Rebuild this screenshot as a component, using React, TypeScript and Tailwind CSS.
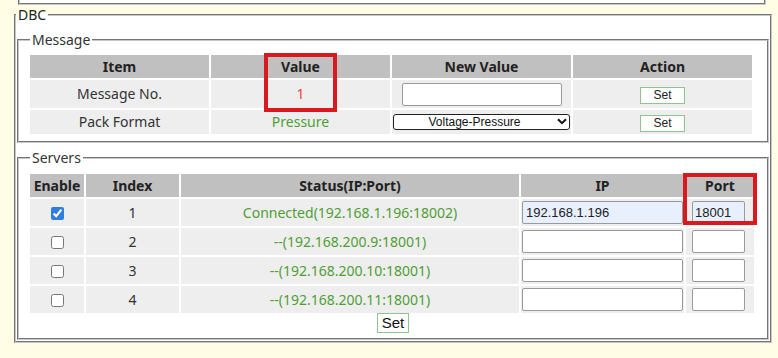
import React from "react";

const groove = "border-2 border-[#c8c8c8] [border-style:groove]";
const th = "bg-[#c0c0c0] h-[23px] p-0 text-center font-bold text-[#222] leading-[20px]";
const td = "bg-[#eeeeee] p-0 text-center leading-[20px]";
const arial = "font-['Liberation_Sans',Arial,sans-serif]";

function SmallSet() {
  return (
    <button className={`${arial} w-[45px] h-[17px] bg-white border border-[#8fc38f] text-[12px] leading-[15px] text-[#222]`}>
      Set
    </button>
  );
}

const servers = [
  { idx: 1, status: "Connected(192.168.1.196:18002)", ip: "192.168.1.196", port: "18001", on: true },
  { idx: 2, status: "--(192.168.200.9:18001)", ip: "", port: "", on: false },
  { idx: 3, status: "--(192.168.200.10:18001)", ip: "", port: "", on: false },
  { idx: 4, status: "--(192.168.200.11:18001)", ip: "", port: "", on: false },
];

export default function App() {
  return (
    <div className="relative w-[778px] h-[358px] overflow-hidden bg-[#fffde6] font-['Noto_Sans',sans-serif] text-[14px] text-[#333]">
      <div className="ml-[18px] w-[748px] h-[5px] bg-white border-x-2 border-b-2 border-t-0 border-[#c8c8c8] [border-style:groove]" />
      <fieldset className={`ml-[14px] w-[758px] bg-white ${groove} px-0 pt-[5px] pb-[1px]`}>
        <legend className="px-[2px] leading-[20px] text-[#222]">DBC</legend>

        <fieldset className={`mx-[1px] ${groove} px-[11px] pt-[3px] pb-[5px]`}>
          <legend className="px-[2px] leading-[20px] text-[#333]">Message</legend>
          <table className="w-[726px] table-fixed border-separate border-spacing-[2px] -ml-[2px]">
            <colgroup>
              <col className="w-1/4" />
              <col className="w-1/4" />
              <col className="w-1/4" />
              <col className="w-1/4" />
            </colgroup>
            <thead>
              <tr>
                <th className={th}>Item</th>
                <th className={th}>Value</th>
                <th className={th}>New Value</th>
                <th className={th}>Action</th>
              </tr>
            </thead>
            <tbody>
              <tr className="h-[28px]">
                <td className={td}>Message No.</td>
                <td className={`${td} text-[#e8453c]`}>1</td>
                <td className={td}>
                  <input className="block mx-auto w-[160px] h-[23px] bg-white border border-[#9a9a9a] rounded-[2px] align-middle" />
                </td>
                <td className={td}>
                  <SmallSet />
                </td>
              </tr>
              <tr className="h-[24px]">
                <td className={td}>Pack Format</td>
                <td className={`${td} text-[#4f9e35]`}>Pressure</td>
                <td className={td}>
                  <div className="relative w-[177px] h-[16px] mx-auto">
                    <select
                      defaultValue="vp"
                      className={`${arial} appearance-none block w-full h-full bg-white border border-[#222] rounded-[3px] text-[12px] leading-[14px] text-[#111] [text-align-last:center] pr-[14px]`}
                    >
                      <option value="vp">Voltage-Pressure</option>
                    </select>
                    <svg className="absolute right-[3px] top-[4px] pointer-events-none" width="10" height="7" viewBox="0 0 10 7">
                      <path d="M1 1.2 L5 5.2 L9 1.2" fill="none" stroke="#111" strokeWidth="2" />
                    </svg>
                  </div>
                </td>
                <td className={td}>
                  <SmallSet />
                </td>
              </tr>
            </tbody>
          </table>
        </fieldset>

        <fieldset className={`mx-[1px] mt-[5px] ${groove} px-[11px] pt-[4px] pb-[5px]`}>
          <legend className="px-[2px] leading-[20px] text-[#333]">Servers</legend>
          <table className="w-[726px] table-fixed border-separate border-spacing-[2px] -ml-[2px]">
            <colgroup>
              <col className="w-[54px]" />
              <col className="w-[93px]" />
              <col className="w-[338px]" />
              <col className="w-[163px]" />
              <col className="w-[68px]" />
            </colgroup>
            <thead>
              <tr>
                <th className={th}>Enable</th>
                <th className={th}>Index</th>
                <th className={th}>Status(IP:Port)</th>
                <th className={th}>IP</th>
                <th className={th}>Port</th>
              </tr>
            </thead>
            <tbody>
              {servers.map((s) => (
                <tr key={s.idx} className="h-[27px]">
                  <td className={td}>
                    <input type="checkbox" defaultChecked={s.on} className="align-middle w-[13px] h-[13px] accent-[#2f7fe0]" />
                  </td>
                  <td className={td}>{s.idx}</td>
                  <td className={`${td} text-[#4f9e35]`}>{s.status}</td>
                  <td className={td}>
                    <input
                      defaultValue={s.ip}
                      className={`${arial} block mx-auto w-[161px] h-[23px] border border-[#9a9a9a] rounded-[2px] px-[3px] text-[13px] text-[#222] ${s.on ? "bg-[#e8f0fe]" : "bg-white"}`}
                    />
                  </td>
                  <td className={td}>
                    <input
                      defaultValue={s.port}
                      className={`${arial} block ml-[6px] w-[53px] h-[23px] border border-[#9a9a9a] rounded-[2px] px-[2px] text-[13px] text-[#222] ${s.on ? "bg-[#e8f0fe]" : "bg-white"}`}
                    />
                  </td>
                </tr>
              ))}
            </tbody>
          </table>
          <div className="flex justify-center -mt-[2px]">
            <button className={`${arial} h-[20px] px-[4px] bg-white border border-[#8fc38f] text-[15px] leading-[18px] text-[#111]`}>
              Set
            </button>
          </div>
        </fieldset>
      </fieldset>

      <div className="absolute left-[264px] top-[53px] w-[73px] h-[59px] border-[4px] border-[#d8191f]" />
      <div className="absolute left-[683px] top-[173px] w-[74px] h-[52px] border-[4px] border-[#d8191f]" />
    </div>
  );
}
